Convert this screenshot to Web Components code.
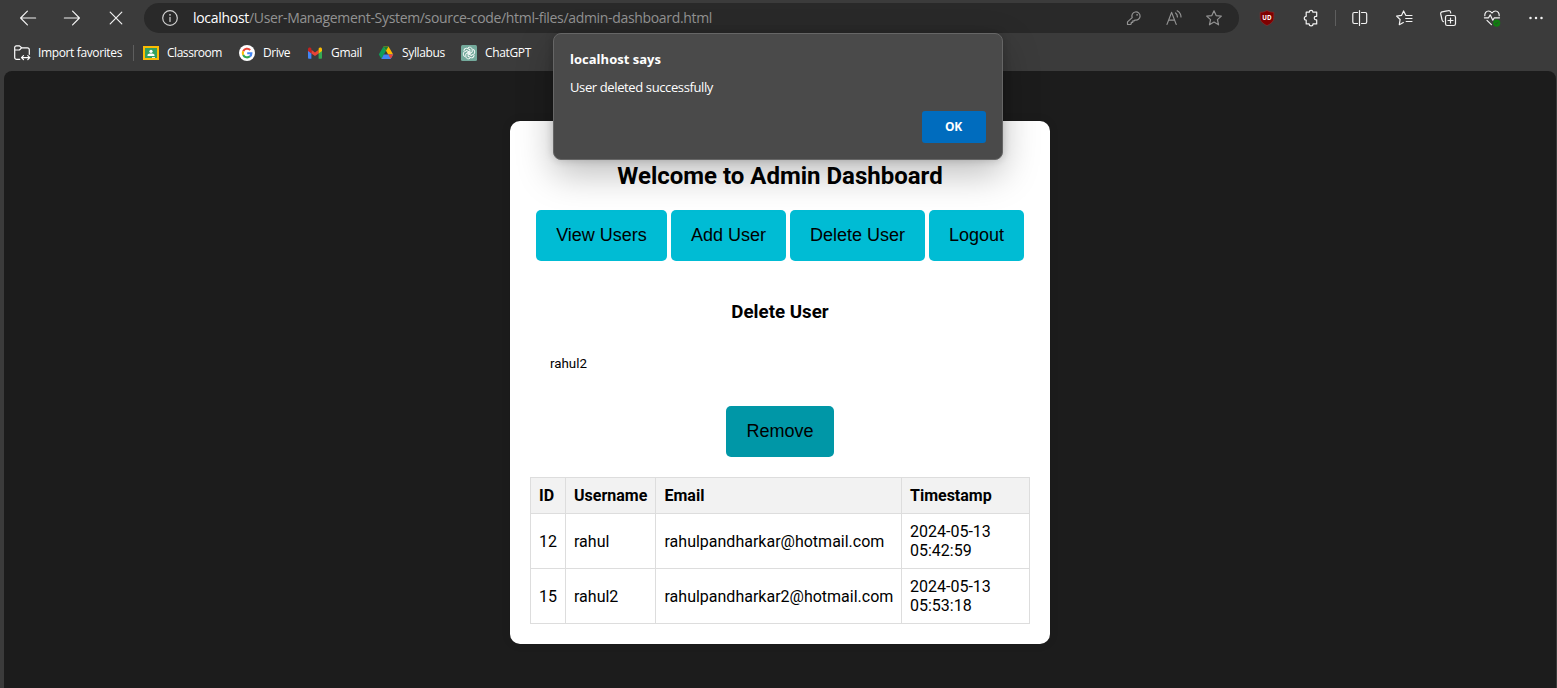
<!DOCTYPE html>
<html lang="en">
<head>
<meta charset="utf-8">
<title>Admin Dashboard</title>
<style>
html,body{margin:0;height:100%;overflow:hidden;background:#3b3b3b}
</style>
</head>
<body>
<browser-window></browser-window>
<script>
const define = (name, html, ready) => customElements.define(name, class extends HTMLElement {
  connectedCallback() {
    if (this.shadowRoot) return;
    const t = document.createElement('template');
    t.innerHTML = html;
    this.attachShadow({mode: 'open'}).append(t.content.cloneNode(true));
    if (ready) ready(this, this.shadowRoot);
  }
});

/* Single-line label whose tracking is adjusted to fill the width in its "w" attribute. */
define('fit-label', `<style>:host{display:inline-block;white-space:nowrap;text-align:left}span{display:inline-block}</style><span><slot></slot></span>`, (el, root) => {
  const w = parseFloat(el.getAttribute('w'));
  const span = root.querySelector('span');
  el.style.width = w + 'px';
  const natural = span.getBoundingClientRect().width;
  if (natural) span.style.letterSpacing = ((w - natural) / el.textContent.length) + 'px';
});

const line = 'fill="none" stroke="currentColor" stroke-width="1.2" stroke-linecap="round" stroke-linejoin="round"';
const icons = {
  back: `<path ${line} d="M15.6 8H.8M7.4 1.2.6 8l6.8 6.8"/>`,
  forward: `<path ${line} d="M.4 8h14.8M8.6 1.2 15.4 8l-6.8 6.8"/>`,
  stop: `<path ${line} d="m2.2 2.2 11.6 11.6M13.8 2.2 2.2 13.8"/>`,
  info: `<circle ${line} cx="8" cy="8" r="7.3"/><path ${line} d="M8 7.4v4"/><circle cx="8" cy="4.8" r=".9" fill="currentColor"/>`,
  key: `<path ${line} d="M6.2 8.1A4.1 4.1 0 1 1 9 10.5L8.2 11.4H6.8v1.400H5.300v1.400L4.600 15H1.500v-2.600z" transform="translate(0 -.5)"/><circle cx="11.1" cy="4.8" r=".9" fill="currentColor"/>`,
  aloud: `<path ${line} d="m1 14.400 4.600-12 4.600 12M2.600 10.200h6M9.600 3a5 5 0 0 1 1.800 4M11.200.8c2.400 1.400 3.800 3.600 3.800 6.200"/>`,
  star: `<path ${line} d="m8 .8 2.150 4.800 5.200.5-3.900 3.500 1.100 5.200L8 12.100l-4.550 2.700 1.100-5.200-3.900-3.500 5.200-.5z"/>`,
  puzzle: `<path ${line} d="M3.200 2.200h3.100A1.800 1.800 0 0 1 9.900 2.200h3.800v4.100h-.7a1.800 1.800 0 0 0 0 3.600h.7v4h-3.700a1.900 1.900 0 0 1-3.800 0H3.200v-3.800a1.900 1.900 0 0 1 0-3.800z"/>`,
  split: `<path ${line} d="M5.500 2.500H2.200A1.400 1.400 0 0 0 .8 3.900v8.200a1.400 1.400 0 0 0 1.400 1.400h3.300M9.500 2.500h3.800a1.400 1.400 0 0 1 1.400 1.400v8.200a1.400 1.400 0 0 1-1.400 1.400H9.500M7.500.5v15"/>`,
  favorites: `<path ${line} d="M9.900 5.400 7.600.9 5.500 5.400.6 6.100l3.500 3.400-.8 5.200 4-2.200M10.200 5.500H16M9.700 8.500H16M10.200 11.500H16"/>`,
  collections: `<rect ${line} x="5.500" y="5.500" width="10" height="10" rx="1.800"/><path ${line} d="M10.500 8v5M8 10.500h5M3.400 11.600A2 2 0 0 1 2.100 10L.7 4a1.800 1.800 0 0 1 1.400-2.200l6.200-1.200a1.800 1.800 0 0 1 2.200 1.400l.2 1"/>`,
  heart: `<path ${line} d="M.8 5.700C.6 2.900 2.200 1 4.500 1 6 1 7.100 1.800 8 3c.9-1.200 2-2 3.500-2 2.300 0 3.900 1.900 3.700 4.700M.4 7.800h4.200l1.600-3 2.600 5.400 1.500-2.400h5.200M3 10.400l4.400 4.200"/><circle cx="12.7" cy="13.1" r="3.6" fill="#107c10"/><path d="m11.200 13.200 1 1 2-2.100" stroke="#2b4b2b" fill="none"/>`,
  dots: `<g fill="currentColor"><circle cx="2.500" cy="8" r="1.250"/><circle cx="8" cy="8" r="1.250"/><circle cx="13.500" cy="8" r="1.250"/></g>`,
  folder: `<path ${line} d="M5.700 14.400H2.600A1.900 1.900 0 0 1 .7 12.500v-10A1.600 1.600 0 0 1 2.300.9h3.200L7.600 2.800h5.800a1.900 1.900 0 0 1 1.900 1.900v4.600M.8 5h4.600l2.200-2.200M8 12.600h7.800M9.500 10.600l-2 2 2 2M13.800 10.600l2 2-2 2"/>`,
  classroom: `<path fill="#fbbc04" d="M0 1h16v14H0z"/><path fill="#34a060" d="M2 3h12v10H2z"/><g fill="#fff"><circle cx="8" cy="6.300" r="1.600"/><path d="M4.500 11V9.800C5 8.700 6.400 8.400 8 8.400s3 .3 3.500 1.400V11z"/></g><path fill="#e1e8d8" d="M9 12h3v1H9z"/>`,
  google: `<circle cx="8" cy="8" r="8" fill="#fff"/><g fill="none" stroke-width="2.100"><path stroke="#ea4335" d="M4.200 6.200A4.400 4.400 0 0 1 11.200 5"/><path stroke="#fbbc05" d="M4.200 6.200a4.500 4.500 0 0 0 0 3.800"/><path stroke="#34a853" d="M4.200 10a4.400 4.400 0 0 0 6.800 1.300"/><path stroke="#4285f4" d="M8.200 8.200h4.200c0 1.400-.5 2.400-1.500 3.200"/></g>`,
  gmail: `<path fill="#4285f4" d="M1 4v8.700c0 .7.5 1.100 1.100 1.100h2.300V7z"/><path fill="#34a853" d="M15 4v8.700c0 .7-.5 1.100-1.100 1.100h-2.300V7z"/><path fill="#ea4335" d="M4.400 4.700 8 7.400l3.600-2.700v3.700L8 11.100 4.400 8.400z"/><path fill="#c5221f" d="M1 4.400c0-1.700 1.700-2.300 2.800-1.400l.6.5v4.900L1 6z"/><path fill="#fbbc04" d="M15 4.400c0-1.700-1.700-2.300-2.800-1.400l-.6.5v4.900L15 6z"/>`,
  drive: `<path fill="#0f9d58" d="M5.400 1.500h.1L8 5.800 3.400 13.700.8 9.600z"/><path fill="#ffba00" d="M5.500 1.500h5L15.200 9.600h-5z"/><path fill="#188038" d="M5.500 1.500h5L8 5.800z"/><path fill="#4285f4" d="M5.800 9.600h9.400l-2.500 4.300H3.300z"/><path fill="#ea4335" d="M10.200 9.600h5l-2.500 4.100z"/>`,
  chatgpt: `<rect width="16" height="16" rx="1.500" fill="#74aa9c"/><g fill="none" stroke="#fff" stroke-width=".9">${[0,60,120,180,240,300].map(a => `<path transform="rotate(${a} 8 8)" d="M7 2.700A2.700 2.700 0 0 1 11.200 4v3.200L7.600 9.300"/>`).join('')}</g>`,
  shield: `<path fill="#800000" stroke="#8e3030" stroke-width=".6" d="M8 .5C5.800 1.800 3.800 2.300 1.200 2.300v5.500c0 3.800 3 6 6.800 7.800 3.800-1.800 6.800-4 6.800-7.800V2.300C12.200 2.300 10.200 1.800 8 .5z"/><text x="8" y="9.800" text-anchor="middle" fill="#fff" font-family="Open Sans,sans-serif" font-weight="700" font-size="6.200">UD</text>`
};
define('ui-icon', `<style>:host{display:block;width:16px;height:16px;flex:none}svg{display:block;overflow:visible}</style><svg width="16" height="16" viewBox="0 0 16 16"></svg>`, (el, root) => {
  root.querySelector('svg').innerHTML = icons[el.getAttribute('name')];
});

define('tool-button', `<style>:host{width:44px;height:36px;display:flex;align-items:center;justify-content:center;flex:none}:host([small]){width:40px}</style><slot></slot>`, (el) => {
  const i = document.createElement('ui-icon'); i.setAttribute('name', el.getAttribute('icon')); el.append(i);
});

define('address-bar', `<style>
:host{display:flex;align-items:center;flex:none;box-sizing:border-box;width:1095px;height:30px;margin-left:6px;padding:0 5px 0 18px;border-radius:15px;background:#292929;color:#929292;font:14px/20px "Open Sans",sans-serif}
.info{color:#d0d0d0;margin-right:15px}
b{font-weight:400;color:#fff}.tools{display:flex;margin-left:auto}
</style><ui-icon class="info" name="info"></ui-icon><b><fit-label w="56">localhost</fit-label></b><fit-label w="463">/User-Management-System/source-code/html-files/admin-dashboard.html</fit-label>
<div class="tools"><tool-button small icon="key"></tool-button><tool-button small icon="aloud"></tool-button><tool-button small icon="star"></tool-button></div>`);

define('bookmark-item', `<style>:host{display:flex;align-items:center;gap:8px;flex:none;height:20px;font:12px/20px "Open Sans",sans-serif;color:#fff}</style><slot></slot>`);

define('browser-chrome', `<style>
:host{display:block;height:71px;color:#f2f2f2;background:#3b3b3b}
.bar{display:flex;align-items:center;height:36px;padding-left:6px}
.sep{width:1px;height:16px;background:#5e5e5e;margin:0 2px;flex:none}
.ext{display:flex;align-items:center;margin-left:6px}
.marks{display:flex;align-items:center;height:34px;padding-left:14px}
.marks .sep{margin:0 9px 0 11px}
bookmark-item+bookmark-item{margin-left:17px}
</style>
<div class="bar"><tool-button icon="back"></tool-button><tool-button icon="forward"></tool-button><tool-button icon="stop"></tool-button><address-bar></address-bar>
<div class="ext"><tool-button icon="shield"></tool-button><tool-button icon="puzzle"></tool-button><i class="sep"></i><tool-button icon="split"></tool-button><tool-button icon="favorites"></tool-button><tool-button icon="collections"></tool-button><tool-button icon="heart"></tool-button><tool-button icon="dots"></tool-button></div></div>
<div class="marks">
<bookmark-item><ui-icon name="folder"></ui-icon><fit-label w="84">Import favorites</fit-label></bookmark-item><i class="sep"></i>
<bookmark-item><ui-icon name="classroom"></ui-icon><fit-label w="55">Classroom</fit-label></bookmark-item>
<bookmark-item><ui-icon name="google"></ui-icon><fit-label w="27">Drive</fit-label></bookmark-item>
<bookmark-item><ui-icon name="gmail"></ui-icon><fit-label w="31">Gmail</fit-label></bookmark-item>
<bookmark-item style="margin-left:16px"><ui-icon name="drive"></ui-icon><fit-label w="43">Syllabus</fit-label></bookmark-item>
<bookmark-item style="margin-left:16px"><ui-icon name="chatgpt"></ui-icon><fit-label w="46">ChatGPT</fit-label></bookmark-item>
</div>`);

define('action-button', `<style>
:host{display:block}
button{display:block;box-sizing:border-box;height:51px;width:100%;padding:0 0 1px;border:0;border-radius:5px;background:#00bcd4;color:#000;font:18px/21px "Liberation Sans",Arial,sans-serif;white-space:nowrap}
:host([pressed]) button{background:#0097a7}
</style><button><slot></slot></button>`);

define('user-table', `<style>
:host{display:block;margin-top:20px}
table{width:500px;border-collapse:collapse;table-layout:fixed;font:16px/19px Roboto,sans-serif}
th,td{border:1px solid #ddd;padding:8px;text-align:left;box-sizing:border-box;white-space:nowrap}
th:nth-child(3),td:nth-child(3){padding-left:8.500px}
th{background:#f2f2f2;font-weight:700;height:36px}
</style><table><colgroup><col style="width:35px"><col style="width:90px"><col style="width:246px"><col></colgroup>
<thead><tr><th>ID</th><th>Username</th><th>Email</th><th>Timestamp</th></tr></thead>
<tbody><tr><td>12</td><td>rahul</td><td>rahulpandharkar@hotmail.com</td><td>2024-05-13<br>05:42:59</td></tr>
<tr><td>15</td><td>rahul2</td><td>rahulpandharkar2@hotmail.com</td><td>2024-05-13<br>05:53:18</td></tr></tbody></table>`);

define('admin-dashboard', `<style>
:host{display:block;box-sizing:border-box;width:540px;height:523px;padding:20px;border-radius:10px;background:#fff;color:#000;font:16px/19px Roboto,sans-serif;box-shadow:0 0 10px rgba(0,0,0,.1)}
h2{margin:21px 0 19px;font-size:24px;line-height:29px;text-align:center}
nav{display:flex;justify-content:center;gap:4px}
h3{margin:40px 0 18px;font-size:18.72px;line-height:22px;text-align:center}
input{display:block;box-sizing:border-box;width:480px;height:44px;margin:0 auto 21px;padding:10px;border:0;background:#fff;color:#000;font:13.333px/16px Roboto,sans-serif;outline:0}
.go{width:108px;margin:0 auto}
</style>
<h2>Welcome to Admin Dashboard</h2>
<nav><action-button style="width:131px">View Users</action-button><action-button style="width:115px">Add User</action-button><action-button style="width:135px">Delete User</action-button><action-button style="width:95px">Logout</action-button></nav>
<h3>Delete User</h3>
<input value="rahul2">
<div class="go"><action-button pressed>Remove</action-button></div>
<user-table></user-table>`);

define('alert-dialog', `<style>
:host{display:flex;flex-direction:column;box-sizing:border-box;width:450px;height:127px;padding:15px 16px 16px;border:1px solid #666;border-radius:8px;background:#4a4a4a;color:#fff;font:13px/20px "Open Sans",sans-serif;box-shadow:0 14px 36px rgba(0,0,0,.26),0 0 8px rgba(0,0,0,.18)}
b{font-weight:700;height:20px}p{margin:8px 0 0;height:20px}
button{align-self:flex-end;margin-top:auto;width:64px;height:32px;padding:0 1px 0 0;border:0;border-radius:3px;background:#006cbe;color:#fff;font:700 12px/20px "Open Sans",sans-serif}
</style><b><fit-label w="91">localhost says</fit-label></b><p><fit-label w="143">User deleted successfully</fit-label></p><button><fit-label w="17">OK</fit-label></button>`);

define('browser-window', `<style>
:host{display:block;position:relative;height:688px;width:1557px;overflow:hidden;background:#3b3b3b}
main{display:flex;justify-content:center;box-sizing:border-box;height:617px;margin:0 1px 0 4px;padding:50px 0 0;border-radius:8px 8px 0 0;background:#1c1c1c}
alert-dialog{position:absolute;left:553px;top:33px}
</style><browser-chrome></browser-chrome><main><admin-dashboard></admin-dashboard></main><alert-dialog></alert-dialog>`);
</script>
</body>
</html>
